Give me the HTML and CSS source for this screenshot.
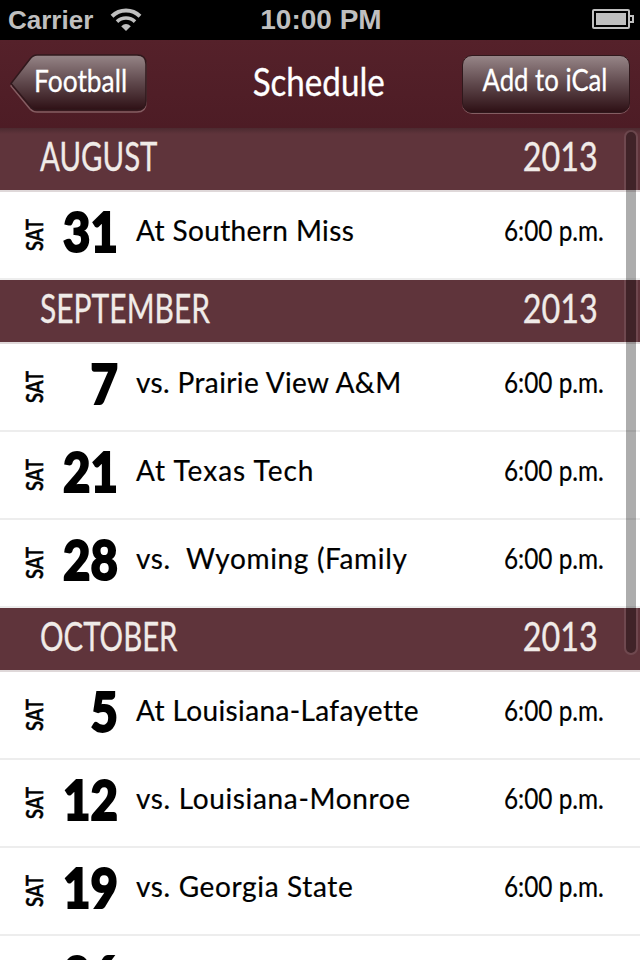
FILE: index.html
```html
<!DOCTYPE html>
<html lang="en">
<head>
    <meta charset="UTF-8">
    <meta name="viewport" content="width=device-width, initial-scale=1.0">
    <title>Schedule</title>
    <link rel="stylesheet" href="styles.css">
</head>
<body>

<!-- Status bar -->
<div class="status">
    <div class="status-left">
        <span class="carrier">Carrier</span>
        <svg class="wifi" width="32" height="24" viewBox="0 0 32 24">
            <path d="M2 8.2 A20 20 0 0 1 30 8.2" fill="none" stroke="#bfbfbf" stroke-width="4"/>
            <path d="M7 13.6 A13 13 0 0 1 25 13.6" fill="none" stroke="#bfbfbf" stroke-width="3.6"/>
            <path d="M11.2 18.2 Q16 14 20.8 18.2 L16 23 Z" fill="#bfbfbf"/>
        </svg>
    </div>
    <span class="clock">10:00 PM</span>
    <svg class="battery" width="42" height="20" viewBox="0 0 42 20">
        <rect x="1" y="1" width="36" height="18" rx="1" fill="none" stroke="#bfbfbf" stroke-width="2"/>
        <rect x="4" y="4" width="30" height="12" fill="#bfbfbf"/>
        <path d="M38 7 H41 V13 H38" fill="none" stroke="#bfbfbf" stroke-width="2"/>
    </svg>
</div>

<!-- Navigation bar -->
<div class="navbar">
    <a class="back">
        <svg class="back-shape" width="138" height="60" viewBox="0 0 138 60">
            <defs>
                <linearGradient id="glass" x1="0" y1="0" x2="0" y2="1">
                    <stop offset="0" stop-color="#968587"/>
                    <stop offset="0.5" stop-color="#5f484c"/>
                    <stop offset="1" stop-color="#2e1015"/>
                </linearGradient>
            </defs>
            <path d="M27 3 Q23 3 20 7 L1 32 L20 55 Q23 58 27 58 H127 Q136 58 136 49 V12 Q136 3 127 3 Z" fill="none" stroke="#845d62" stroke-width="1.5"/>
            <path d="M27 1 Q23 1 20 5 L1 29.500 L20 52 Q23 56 27 56 H127 Q136 56 136 47 V10 Q136 1 127 1 Z" fill="url(#glass)" stroke="#30181c" stroke-width="1.5"/>
        </svg>
        <span class="back-label">Football</span>
    </a>
    <span class="nav-title">Schedule</span>
    <a class="add"><span class="add-label">Add to iCal</span></a>
</div>

<div class="schedule">
    <div class="month first"><span class="name">AUGUST</span><span class="year">2013</span></div>
    <div class="game"><span class="day">SAT</span><span class="date">31</span><span class="title tight">At Southern Miss</span><span class="time">6:00 p.m.</span></div>

    <div class="month"><span class="name wide">SEPTEMBER</span><span class="year">2013</span></div>
    <div class="game"><span class="day">SAT</span><span class="date">7</span><span class="title tight">vs. Prairie View A&amp;M</span><span class="time">6:00 p.m.</span></div>
    <div class="game"><span class="day">SAT</span><span class="date">21</span><span class="title loose">At Texas Tech</span><span class="time">6:00 p.m.</span></div>
    <div class="game"><span class="day">SAT</span><span class="date">28</span><span class="title">vs.  Wyoming (Family</span><span class="time">6:00 p.m.</span></div>

    <div class="month"><span class="name">OCTOBER</span><span class="year">2013</span></div>
    <div class="game"><span class="day">SAT</span><span class="date">5</span><span class="title tight">At Louisiana-Lafayette</span><span class="time">6:00 p.m.</span></div>
    <div class="game"><span class="day">SAT</span><span class="date">12</span><span class="title">vs. Louisiana-Monroe</span><span class="time">6:00 p.m.</span></div>
    <div class="game"><span class="day">SAT</span><span class="date">19</span><span class="title">vs. Georgia State</span><span class="time">6:00 p.m.</span></div>
    <div class="game"><span class="day"></span><span class="date">26</span></div>

    <div class="scrollbar"></div>
</div>

</body>
</html>
```

FILE: styles.css
```css
* {
    box-sizing: border-box;
}
body {
    margin: 0;
    width: 640px;
    height: 960px;
    overflow: hidden;
    display: flex;
    flex-direction: column;
    background-color: #fff;
    font-family: Lato, "Open Sans", sans-serif;
    color: #000;
}

/* Status bar */
.status {
    height: 40px;
    flex: none;
    display: grid;
    grid-template-columns: 1fr auto 1fr;
    align-items: center;
    padding: 0 6px 0 8px;
    background-color: #000;
    color: #bfbfbf;
    font-family: "Liberation Sans", Arial, sans-serif;
    font-weight: bold;
}
.status-left {
    display: flex;
    align-items: center;
    gap: 17px;
}
.carrier {
    font-size: 26px;
}
.clock {
    font-size: 28px;
}
.battery {
    justify-self: end;
    margin-bottom: 2px;
}

/* Navigation bar */
.navbar {
    height: 88px;
    flex: none;
    display: grid;
    grid-template-columns: 1fr auto 1fr;
    align-items: center;
    padding: 0 10px;
    background: linear-gradient(#55212a, #4d1c25);
    color: #fff;
    -webkit-text-stroke: 0.3px #fff;
}
.nav-title {
    padding-bottom: 5px;
    font-size: 39px;
    line-height: 79px;
    transform: translateX(-1px) scaleX(0.85);
}
.back {
    display: grid;
    width: 138px;
    height: 60px;
}
.back-shape, .back-label {
    grid-area: 1 / 1;
}
.back-label {
    z-index: 1;
    padding-left: 24px;
    font-size: 31px;
    line-height: 52px;
    transform: scaleX(0.85);
    transform-origin: 24px 0;
}
.add {
    justify-self: end;
    width: 168px;
    height: 58px;
    text-align: center;
    border: 1px solid #30181c;
    border-radius: 10px;
    background: linear-gradient(#968587, #5f484c 50%, #2e1015);
    box-shadow: 0 1px 0 #845d62;
}
.add-label {
    display: block;
    font-size: 31px;
    line-height: 46px;
    white-space: nowrap;
    transform: translateX(-1px) scaleX(0.83);
}

/* Games list */
.schedule {
    position: relative;
    flex: 1;
    overflow: hidden;
}
.month {
    height: 64px;
    display: flex;
    justify-content: space-between;
    padding: 0 42px 0 40px;
    border-bottom: 2px solid #dfd8d9;
    background-color: #5f343b;
    color: #f0ebe8;
    font-size: 40px;
    line-height: 56px;
    -webkit-text-stroke: 0.3px #f0ebe8;
}
.month.first {
    background: linear-gradient(#4c2a30, #5f343b 6px);
}
.name {
    transform: scaleX(0.735);
    transform-origin: left;
}
.name.wide {
    transform: scaleX(0.75);
}
.year {
    transform: scaleX(0.81);
    transform-origin: right;
}
.game {
    height: 88px;
    display: grid;
    grid-template-columns: 24px 88px 1fr auto;
    padding: 0 36px 0 22px;
    border-bottom: 2px solid #ededed;
    background-color: #fff;
}
.day {
    align-self: center;
    writing-mode: vertical-rl;
    font-size: 23px;
    font-weight: 600;
    line-height: 24px;
    -webkit-text-stroke: 0.5px #000;
    transform: rotate(180deg) scaleY(0.8);
}
.date {
    padding-right: 16px;
    text-align: right;
    font-size: 55px;
    font-weight: 900;
    line-height: 79px;
    -webkit-text-stroke: 2px #000;
    transform: scaleX(0.86);
    transform-origin: 72px 0;
}
.title {
    padding-left: 2px;
    font-size: 28px;
    line-height: 76px;
    letter-spacing: 0.65px;
    white-space: pre;
    -webkit-text-stroke: 0.2px #000;
}
.title.tight {
    letter-spacing: 0.38px;
}
.title.loose {
    letter-spacing: 1px;
}
.time {
    font-size: 28px;
    line-height: 76px;
    -webkit-text-stroke: 0.2px #000;
    transform: scaleX(0.87);
    transform-origin: right;
}

/* Scroll indicator over the list */
.scrollbar {
    position: absolute;
    top: 2px;
    right: 2px;
    width: 14px;
    height: 525px;
    border: 2px solid rgba(255, 255, 255, 0.1);
    border-radius: 7px;
    background-color: rgba(0, 0, 0, 0.32);
    background-clip: padding-box;
}
```
